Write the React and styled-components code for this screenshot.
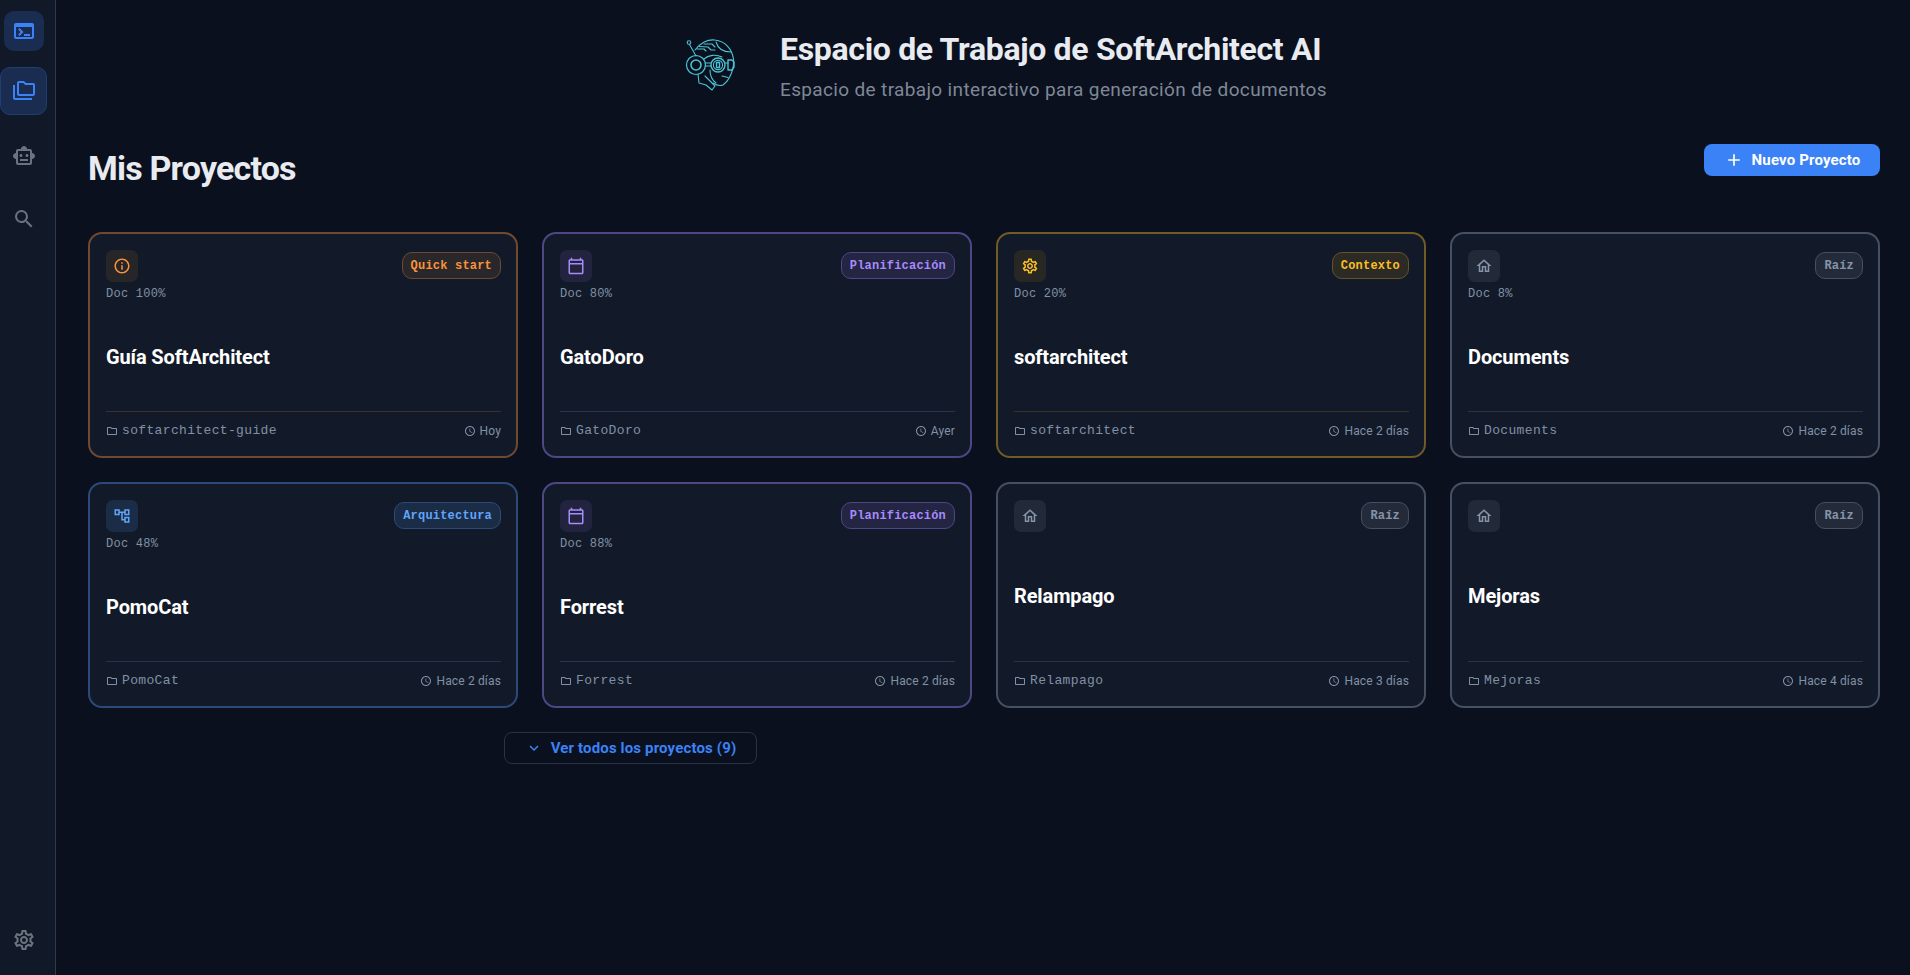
import React from 'react';
import styled, { createGlobalStyle } from 'styled-components';
import {
  MdOutlineTerminal, MdOutlineFolderCopy, MdOutlineSmartToy, MdSearch, MdOutlineSettings,
  MdOutlineInfo, MdOutlineCalendarToday, MdOutlineAccountTree, MdOutlineHome, MdOutlineFolder,
  MdOutlineSchedule, MdAdd, MdExpandMore,
} from 'react-icons/md';

const Global = createGlobalStyle`
  html, body { margin: 0; padding: 0; height: 100%; background: #0a0f1e; overflow: hidden; }
  * { box-sizing: border-box; }
  body { font-family: Roboto, "Liberation Sans", sans-serif; }
`;

const Shell = styled.div`display: flex; width: 1910px; height: 975px; background: #0a101e;`;
const Rail = styled.nav`
  width: 56px; flex: none; display: flex; flex-direction: column; align-items: flex-start;
  background: #111827; border-right: 1px solid #2f3a4d; padding-top: 11px;
`;
const RailBtn = styled.div`
  width: ${p => p.$wide ? 47 : 40}px; height: ${p => p.$wide ? 48 : 40}px;
  border-radius: 10px; display: flex; align-items: center; justify-content: center;
  color: ${p => p.$active ? '#3b82f6' : '#6b7280'};
  background: ${p => p.$active ? '#1a2d50' : 'transparent'};
  border: ${p => p.$wide ? '1px solid #1f3f73' : 'none'};
  margin-bottom: ${p => p.$mb || 0}px;
  margin-left: ${p => p.$wide ? 0 : 3.5}px;
`;
const RailSpacer = styled.div`flex: 1;`;
const Main = styled.main`flex: 1; padding: 0 30px 0 32px; display: flex; flex-direction: column;`;
const Hero = styled.header`display: flex; align-items: center; height: 128px; padding-left: 596px; gap: 40px; padding-top: 4px;`;
const LogoBox = styled.div`width: 56px; height: 56px; flex: none; margin-top: -4px;`;
const HeroText = styled.div`display: flex; flex-direction: column; gap: 11px; margin-top: -2px;`;
const HeroTitle = styled.h1`margin: 0; font-size: 32px; line-height: 38px; font-weight: 700; color: #e8ebf0; white-space: nowrap; letter-spacing: -.32px;`;
const HeroSub = styled.p`margin: 0; font-size: 19px; line-height: 22px; color: #7f8896; letter-spacing: .35px; white-space: nowrap;`;
const TitleRow = styled.div`display: flex; justify-content: space-between; align-items: flex-start; height: 104px; padding-top: 16px;`;
const PageTitle = styled.h2`margin: 0; font-size: 34px; line-height: 48px; font-weight: 700; color: #e8ebf0; letter-spacing: -.8px;`;
const NewBtn = styled.button`
  width: 176px; height: 32px; border: none; border-radius: 8px; background: #3b82f6; color: #fff;
  font: 700 15px Roboto, sans-serif; letter-spacing: .15px; display: flex; align-items: center; justify-content: center; gap: 8px; padding: 0;
`;
const Grid = styled.div`display: grid; grid-template-columns: repeat(4, 430px); grid-auto-rows: 226px; gap: 24px;`;
const Card = styled.article`
  border: 2px solid ${p => p.$border}; border-radius: 14px; background: #121a29;
  padding: 16px 15px 0 16px; display: flex; flex-direction: column;
`;
const CardTop = styled.div`display: flex; justify-content: space-between; align-items: flex-start; height: 32px; flex: none;`;
const IconBox = styled.div`
  width: 32px; height: 32px; border-radius: 7px; background: ${p => p.$bg};
  display: flex; align-items: center; justify-content: center; color: ${p => p.$color};
`;
const Badge = styled.span`
  height: 27px; margin-top: 2px; padding: 1px 8px 0; border: 1px solid ${p => p.$border}; border-radius: 10px; background: ${p => p.$bg};
  color: ${p => p.$color}; font: 700 12px/24px "Liberation Mono", monospace; letter-spacing: .2px;
`;
const Doc = styled.div`font: 12px/18px "Liberation Mono", monospace; letter-spacing: .25px; color: #8190a5; height: 18px; margin-top: 3px; flex: none;`;
const CardTitleArea = styled.div`flex: 1; display: flex; align-items: center; padding-bottom: 1px;`;
const CardTitle = styled.h3`margin: 0; font-size: 20px; line-height: 24px; font-weight: 700; color: #fff; letter-spacing: -.12px;`;
const Footer = styled.div`
  flex: none; height: 45px; border-top: 1px solid ${p => p.$line}; display: flex; justify-content: space-between; align-items: center; padding-bottom: 7px; color: #8190a5;
`;
const Path = styled.span`display: flex; align-items: center; gap: 4px; font: 13px "Liberation Mono", monospace; letter-spacing: .35px;`;
const When = styled.span`display: flex; align-items: center; gap: 4px; font-size: 12px; letter-spacing: .15px;`;
const More = styled.button`
  margin: 24px 0 0 416px; width: 253px; height: 32px; background: transparent; border: 1px solid #283347; border-radius: 8px;
  color: #3b82f6; font: 700 15px Roboto, sans-serif; letter-spacing: .15px; display: flex; align-items: center; justify-content: center; gap: 8px; padding: 0;
`;

const T = {
  orange: { c: '#fb923c', b: '#6f4a31', ib: '#262528', bb: '#292729', bd: '#6a4a32', line: '#3b3230' },
  purple: { c: '#a78bfa', b: '#4f4686', ib: '#22243f', bb: '#242443', bd: '#4f4686', line: '#2f3150' },
  yellow: { c: '#fbbf24', b: '#705a26', ib: '#272823', bb: '#2b2a24', bd: '#665428', line: '#34332a' },
  blue: { c: '#60a5fa', b: '#2b4a78', ib: '#1b2c47', bb: '#1b2c47', bd: '#2b4a78', line: '#23344f' },
  gray: { c: '#8794a8', b: '#465063', ib: '#222a39', bb: '#232b3a', bd: '#465063', line: '#2a3342' },
};

const P = [
  ['orange', MdOutlineInfo, 'Quick start', 'Doc 100%', 'Guía SoftArchitect', 'softarchitect-guide', 'Hoy'],
  ['purple', MdOutlineCalendarToday, 'Planificación', 'Doc 80%', 'GatoDoro', 'GatoDoro', 'Ayer'],
  ['yellow', MdOutlineSettings, 'Contexto', 'Doc 20%', 'softarchitect', 'softarchitect', 'Hace 2 días'],
  ['gray', MdOutlineHome, 'Raíz', 'Doc 8%', 'Documents', 'Documents', 'Hace 2 días'],
  ['blue', MdOutlineAccountTree, 'Arquitectura', 'Doc 48%', 'PomoCat', 'PomoCat', 'Hace 2 días'],
  ['purple', MdOutlineCalendarToday, 'Planificación', 'Doc 88%', 'Forrest', 'Forrest', 'Hace 2 días'],
  ['gray', MdOutlineHome, 'Raíz', null, 'Relampago', 'Relampago', 'Hace 3 días'],
  ['gray', MdOutlineHome, 'Raíz', null, 'Mejoras', 'Mejoras', 'Hace 4 días'],
];

const Logo = () => (
  <svg viewBox="24 18 56 56" width="56" height="56" fill="none" stroke="#4cc3d4" strokeWidth="1.1" strokeLinecap="round" strokeLinejoin="round">
    <circle cx="29" cy="24.5" r="1.8" />
    <path d="M29.5 26.5 L36 38" />
    <path d="M35 32 C40 25 48 21 55 22 C65 23 72 31 73.5 41 C74.5 50 70 62 63 67 C60 68 56 67 53 65" />
    <path d="M37 31 L44 31 L46 33 M39 28.5 L48 29 L51 32 L55 32 M44 26 L52 26 L55 29 M56 24 C58 31 64 34 71 34" />
    <circle cx="36" cy="47" r="9.5" strokeWidth="1.2" />
    <circle cx="36" cy="47" r="5" strokeWidth="1.6" />
    <circle cx="58" cy="47" r="7" strokeWidth="1.4" />
    <circle cx="58" cy="47" r="4.6" />
    <path d="M56.5 44.5 h3 v5 h-3 z" strokeWidth="1.4" />
    <path d="M45 45 L51 45 M45 48 L51 48" />
    <path d="M65 45 L68 45" />
    <path d="M68 42 h4 l2 2 v5 l-2 3 h-4 z" strokeWidth="1.4" />
    <path d="M62 58 L68 59.5" />
    <path d="M38 56 L39 65 L46 67 L52 72 L55 68 L45 58" />
    <path d="M44 41 C48 37 56 36 62 39" />
    <path d="M50 52 C50 58 52 62 56 65" />
  </svg>
);

export default function App() {
  return (
    <Shell>
      <Global />
      <Rail>
        <RailBtn $active $mb={16}><MdOutlineTerminal size={24} /></RailBtn>
        <RailBtn $active $wide $mb={21}><MdOutlineFolderCopy size={24} /></RailBtn>
        <RailBtn $mb={23}><MdOutlineSmartToy size={24} /></RailBtn>
        <RailBtn><MdSearch size={24} /></RailBtn>
        <RailSpacer />
        <RailBtn $mb={15}><MdOutlineSettings size={24} /></RailBtn>
      </Rail>
      <Main>
        <Hero>
          <LogoBox><Logo /></LogoBox>
          <HeroText>
            <HeroTitle>Espacio de Trabajo de SoftArchitect AI</HeroTitle>
            <HeroSub>Espacio de trabajo interactivo para generación de documentos</HeroSub>
          </HeroText>
        </Hero>
        <TitleRow>
          <PageTitle>Mis Proyectos</PageTitle>
          <NewBtn><MdAdd size={20} />Nuevo Proyecto</NewBtn>
        </TitleRow>
        <Grid>
          {P.map(([k, Icon, badge, doc, title, path, when]) => {
            const t = T[k];
            return (
              <Card key={title} $border={t.b}>
                <CardTop>
                  <IconBox $bg={t.ib} $color={t.c}><Icon size={18} /></IconBox>
                  <Badge $border={t.bd} $bg={t.bb} $color={t.c}>{badge}</Badge>
                </CardTop>
                {doc && <Doc>{doc}</Doc>}
                <CardTitleArea><CardTitle>{title}</CardTitle></CardTitleArea>
                <Footer $line={t.line}>
                  <Path><MdOutlineFolder size={12} />{path}</Path>
                  <When><MdOutlineSchedule size={12} />{when}</When>
                </Footer>
              </Card>
            );
          })}
        </Grid>
        <More><MdExpandMore size={18} />Ver todos los proyectos (9)</More>
      </Main>
    </Shell>
  );
}
